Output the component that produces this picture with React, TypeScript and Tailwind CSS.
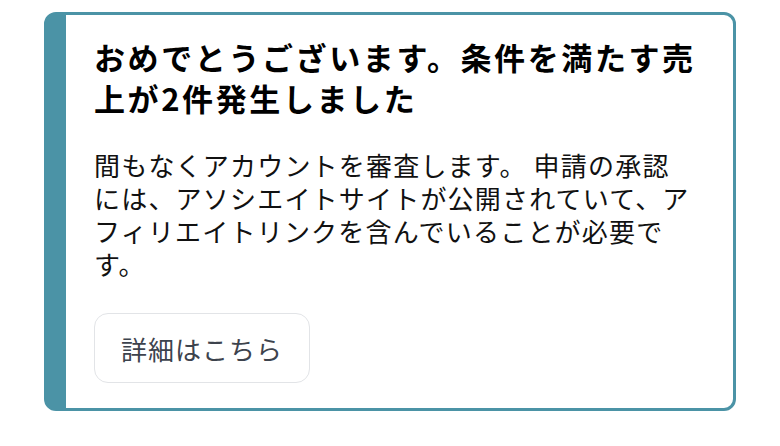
import React from 'react';

const jp = { fontFamily: '"Noto Sans CJK JP", "Noto Sans", sans-serif' };

export default function App() {
  return (
    <div className="w-[780px] h-[446px] bg-white pt-[12px] pl-[44px]" style={jp}>
      <div className="w-[692px] h-[399px] rounded-[12px] border-[3px] border-l-[22px] border-[#4b93a6] bg-white pl-[28px] pr-[16px] pt-[21px]">
        <h1 className="text-[31px] leading-[41px] font-bold tracking-[2.6px] text-black">
          おめでとうございます。条件を満たす売
          <br />
          上が2件発生しました
        </h1>
        <p className="mt-[30px] text-[26px] leading-[33px] tracking-[1.2px] text-[#111]">
          間もなくアカウントを審査します。 申請の承認
          <br />
          には、アソシエイトサイトが公開されていて、ア
          <br />
          フィリエイトリンクを含んでいることが必要で
          <br />
          す。
        </p>
        <button className="mt-[33px] h-[70px] px-[26px] rounded-[14px] border border-[#e2e4e7] bg-white text-[26px] tracking-[1px] text-[#3d434d]">
          詳細はこちら
        </button>
      </div>
    </div>
  );
}
